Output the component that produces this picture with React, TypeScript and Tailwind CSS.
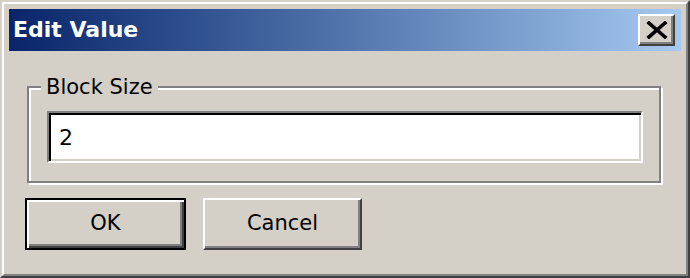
import { useState } from "react";

const font = { fontFamily: '"DejaVu Sans", Tahoma, Verdana, sans-serif' };

function CloseGlyph() {
  return (
    <svg width="22" height="18" viewBox="0 0 22 18" className="block">
      <path d="M3 2 L19 16 M19 2 L3 16" stroke="#000" strokeWidth="3.6" strokeLinecap="square" />
    </svg>
  );
}

export default function App() {
  const [value, setValue] = useState("2");

  return (
    <div className="w-[690px] h-[278px] bg-white" style={font}>
      {/* Window frame */}
      <div className="w-full h-full border-2 border-t-[#d4d0c8] border-l-[#d4d0c8] border-b-[#404040] border-r-[#404040] bg-[#d4d0c8]">
        <div className="w-full h-full border-2 border-t-white border-l-white border-b-[#808080] border-r-[#808080] p-[5px] flex flex-col">
          {/* Title bar */}
          <div className="h-[42px] shrink-0 flex items-center justify-between pl-[4px] pr-[6px] bg-gradient-to-r from-[#0a246a] to-[#a6caf0]">
            <span className="text-white font-bold text-[22px] leading-none">Edit Value</span>
            <button className="w-[37px] h-[32px] flex items-center justify-center bg-[#d4d0c8] border-2 border-t-white border-l-white border-b-[#404040] border-r-[#404040] shadow-[inset_-2px_-2px_0_#808080]">
              <CloseGlyph />
            </button>
          </div>

          {/* Group box */}
          <fieldset className="mt-[23px] ml-[18px] mr-[20px] border-2 border-[#808080] shadow-[inset_2px_2px_0_#fff,2px_2px_0_#fff] pl-[12px] pr-[16px] pb-[18px]">
            <legend className="px-[5px] bg-[#d4d0c8] text-[21px] leading-[26px] text-black">Block Size</legend>
            <div className="mt-[11px] ml-[6px] h-[52px] border-2 border-t-[#808080] border-l-[#808080] border-b-white border-r-white shadow-[inset_2px_2px_0_#000,inset_-2px_-2px_0_#d4d0c8] bg-white flex items-center">
              <input
                value={value}
                onChange={(e) => setValue(e.target.value)}
                className="w-full h-full bg-transparent outline-none pl-[10px] text-[22px] text-black"
                style={font}
              />
            </div>
          </fieldset>

          {/* Buttons */}
          <div className="mt-[15px] ml-[16px] flex gap-[17px]">
            <button className="w-[161px] h-[52px] border-2 border-black bg-[#d4d0c8] shadow-[inset_2px_2px_0_#fff,inset_-2px_-2px_0_#404040,inset_-4px_-4px_0_#808080] text-[21px] text-black">
              OK
            </button>
            <button className="w-[159px] h-[52px] border-2 border-t-white border-l-white border-b-[#404040] border-r-[#404040] bg-[#d4d0c8] shadow-[inset_-2px_-2px_0_#808080] text-[21px] text-black">
              Cancel
            </button>
          </div>
        </div>
      </div>
    </div>
  );
}
